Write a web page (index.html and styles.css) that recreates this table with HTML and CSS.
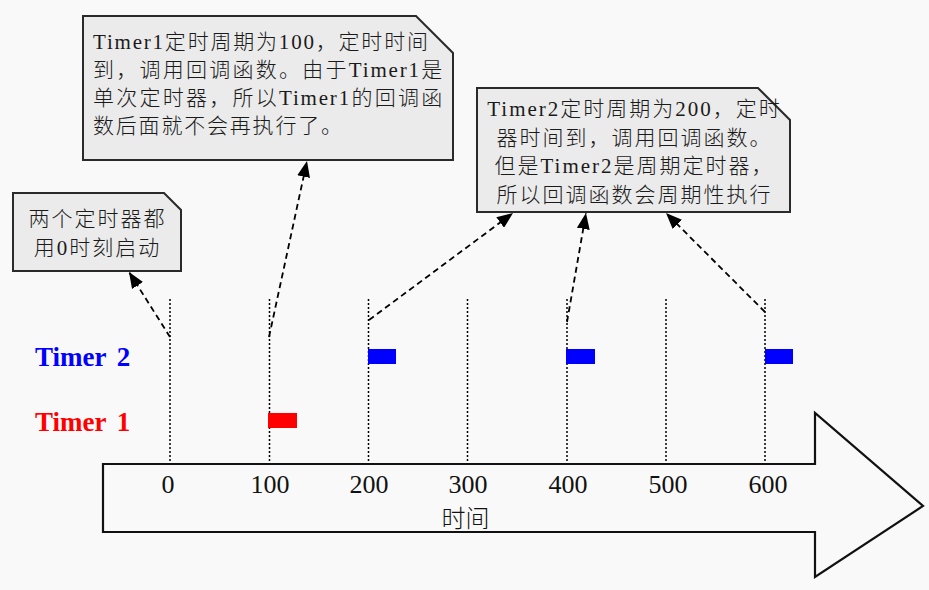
FILE: index.html
```html
<!DOCTYPE html>
<html lang="zh-CN">
<head>
<meta charset="utf-8">
<title>Timer 示意图</title>
<link rel="stylesheet" href="styles.css">
</head>
<body>
<div class="canvas">
  <svg class="shapes" width="929" height="590" viewBox="0 0 929 590">
    <defs>
      <marker id="ah" viewBox="0 0 16 13" refX="16" refY="6.5" markerWidth="16" markerHeight="13" markerUnits="userSpaceOnUse" orient="auto">
        <path d="M0,0 L16,6.5 L0,13 z" fill="#000"/>
      </marker>
    </defs>
    <polygon class="time-arrow" points="103,464 815,464 815,413 923,506 815,577 815,532 103,532"/>
    <g class="ticks">
      <line x1="170" y1="299" x2="170" y2="463"/>
      <line x1="269.5" y1="299" x2="269.5" y2="463"/>
      <line x1="368.5" y1="299" x2="368.5" y2="463"/>
      <line x1="467.5" y1="299" x2="467.5" y2="463"/>
      <line x1="567" y1="299" x2="567" y2="463"/>
      <line x1="666" y1="299" x2="666" y2="463"/>
      <line x1="765" y1="299" x2="765" y2="463"/>
    </g>
    <g class="bars">
      <rect class="bar-t2" x="368" y="349" width="28" height="15"/>
      <rect class="bar-t2" x="566" y="349" width="29" height="15"/>
      <rect class="bar-t2" x="765" y="349" width="28" height="15"/>
      <rect class="bar-t1" x="268" y="413" width="29" height="15"/>
    </g>
    <g class="notes">
      <polygon points="83,16 416,16 453,53 453,160 83,160"/>
      <polygon points="13,193 164,193 181,210 181,271 13,271"/>
      <polygon points="477,88 758,88 790,120 790,212 477,212"/>
    </g>
    <g class="leaders">
      <line x1="170" y1="337" x2="129" y2="272" marker-end="url(#ah)"/>
      <line x1="269" y1="337" x2="307" y2="161" marker-end="url(#ah)"/>
      <line x1="369" y1="320" x2="513" y2="213" marker-end="url(#ah)"/>
      <line x1="567" y1="322" x2="586" y2="213" marker-end="url(#ah)"/>
      <line x1="765" y1="312" x2="666" y2="213" marker-end="url(#ah)"/>
    </g>
  </svg>

  <div class="note-text note-t1">
    <div class="ln">Timer1定时周期为100，定时时间</div>
    <div class="ln just">到，调用回调函数。由于Timer1是</div>
    <div class="ln just">单次定时器，所以Timer1的回调函</div>
    <div class="ln">数后面就不会再执行了。</div>
  </div>

  <div class="note-text note-start">
    <div class="ln">两个定时器都</div>
    <div class="ln">用0时刻启动</div>
  </div>

  <div class="note-text note-t2">
    <div class="ln">Timer2定时周期为200，定时</div>
    <div class="ln">器时间到，调用回调函数。</div>
    <div class="ln">但是Timer2是周期定时器，</div>
    <div class="ln">所以回调函数会周期性执行</div>
  </div>

  <div class="row-label label-t2">Timer 2</div>
  <div class="row-label label-t1">Timer 1</div>

  <div class="tick-label tl-0">0</div>
  <div class="tick-label tl-100">100</div>
  <div class="tick-label tl-200">200</div>
  <div class="tick-label tl-300">300</div>
  <div class="tick-label tl-400">400</div>
  <div class="tick-label tl-500">500</div>
  <div class="tick-label tl-600">600</div>

  <div class="axis-title">时间</div>
</div>
</body>
</html>
```

FILE: styles.css
```css
html, body {
  margin: 0;
  padding: 0;
  background: #f9f9f9;
}

.canvas {
  position: relative;
  width: 929px;
  height: 590px;
  overflow: hidden;
  font-family: "Liberation Serif", "Noto Sans CJK SC", serif;
  color: #111;
}

.shapes {
  position: absolute;
  left: 0;
  top: 0;
  display: block;
}

.time-arrow {
  fill: #f9f9f9;
  stroke: #111;
  stroke-width: 2.2;
  stroke-linejoin: miter;
}

.ticks line {
  stroke: #000;
  stroke-width: 1.5;
  stroke-dasharray: 2 2;
}

.bar-t2 { fill: #0000ff; }
.bar-t1 { fill: #ff0000; }

.notes polygon {
  fill: #ebebeb;
  stroke: #2a2a2a;
  stroke-width: 2;
  stroke-linejoin: miter;
}

.leaders line {
  stroke: #000;
  stroke-width: 1.8;
  stroke-dasharray: 6 4;
}

/* note texts */
.note-text {
  position: absolute;
  font-size: 21px;
  font-weight: 300;
  letter-spacing: 1.8px;
  white-space: nowrap;
  color: #1a1a1a;
}

.note-text .ln {
  height: 28px;
  line-height: 28px;
}

.note-t1 {
  left: 93px;
  top: 28px;
  width: 351px;
  text-align: left;
}

.note-t1 .just {
  text-align: justify;
  text-align-last: justify;
  text-justify: inter-character;
}

.note-start {
  left: 13px;
  top: 205px;
  width: 169px;
  text-align: center;
  letter-spacing: 2px;
}

.note-start .ln {
  height: 29px;
  line-height: 29px;
}

.note-t2 {
  left: 477px;
  top: 95px;
  width: 315px;
  text-align: center;
  letter-spacing: 2px;
}

.note-t2 .ln {
  height: 28.5px;
  line-height: 28.5px;
}

/* row labels */
.row-label {
  position: absolute;
  left: 35px;
  font-size: 27px;
  font-weight: bold;
  line-height: 27px;
  word-spacing: 4px;
  white-space: nowrap;
}

.label-t2 { top: 344px; color: #0000ff; }
.label-t1 { top: 409px; color: #ff0000; }

/* tick labels */
.tick-label {
  position: absolute;
  top: 472px;
  width: 60px;
  font-size: 26px;
  line-height: 26px;
  text-align: center;
  color: #111;
}

.tl-0   { left: 138px; }
.tl-100 { left: 240px; }
.tl-200 { left: 339px; }
.tl-300 { left: 438px; }
.tl-400 { left: 538px; }
.tl-500 { left: 638px; }
.tl-600 { left: 738px; }

.axis-title {
  position: absolute;
  left: 435px;
  top: 505px;
  width: 61px;
  font-family: "Noto Sans CJK SC", sans-serif;
  font-size: 24px;
  font-weight: 300;
  line-height: 24px;
  text-align: center;
  color: #111;
}
```
